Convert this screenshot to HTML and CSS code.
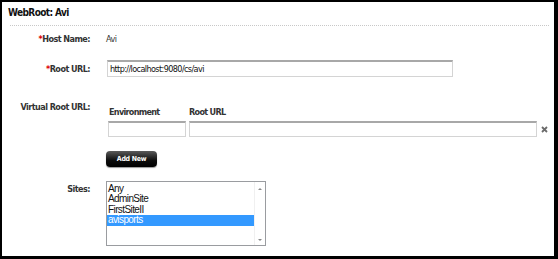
FILE: index.html
```html
<!DOCTYPE html>
<html lang="en">
<head>
    <meta charset="UTF-8">
    <title>WebRoot: Avi</title>
    <link rel="stylesheet" href="styles.css">
</head>
<body>
    <div class="frame">
        <h1 class="title">WebRoot: Avi</h1>
        <div class="dots"></div>

        <div class="row host">
            <label class="lbl"><span class="req">*</span>Host Name:</label>
            <div class="val">Avi</div>
        </div>

        <div class="row url">
            <label class="lbl"><span class="req">*</span>Root URL:</label>
            <div class="val"><input class="txt wide" type="text" value="http://localhost:9080/cs/avi"></div>
        </div>

        <div class="row virtual">
            <label class="lbl">Virtual Root URL:</label>
            <div class="val">
                <div class="heads">
                    <span class="env">Environment</span>
                    <span>Root URL</span>
                </div>
                <div class="pair">
                    <input class="txt env-in" type="text">
                    <input class="txt root-in" type="text">
                    <svg class="del" width="7" height="7" viewBox="0 0 7 7"><path d="M1 1L6 6M6 1L1 6" stroke="#6b6b6b" stroke-width="1.8"/></svg>
                </div>
                <button class="add">Add New</button>
            </div>
        </div>

        <div class="row sites">
            <label class="lbl">Sites:</label>
            <div class="val">
                <div class="list">
                    <ul>
                        <li>Any</li>
                        <li>AdminSite</li>
                        <li>FirstSiteII</li>
                        <li class="sel">avisports</li>
                    </ul>
                    <div class="bar">
                        <span class="up"></span>
                        <span class="down"></span>
                    </div>
                </div>
            </div>
        </div>
    </div>
</body>
</html>
```
FILE: styles.css
```css
*{
    margin:0;
    padding:0;
    box-sizing:border-box;
}
body{
    background:#fff;
    font-family:"DejaVu Sans Condensed","DejaVu Sans",sans-serif;
    font-size:10px;
    color:#333;
}
.frame{
    width:558px;
    height:259px;
    border:2px solid #000;
    border-right-width:4px;
    border-bottom-width:3px;
    background:#fff;
}
.title{
    font-size:10px;
    font-weight:bold;
    letter-spacing:-0.6px;
    color:#111;
    padding:5px 0 0 6px;
    line-height:12px;
}
.dots{
    margin:6px 5px 0 8px;
    border-bottom:1px dotted #c8c8c8;
}
.row{
    display:grid;
    grid-template-columns:88px 1fr;
    column-gap:16px;
}
.lbl{
    text-align:right;
    font-weight:bold;
    font-size:9px;
    letter-spacing:-0.55px;
    color:#333;
    line-height:12px;
}
.req{
    color:#d00;
}
.host{
    margin-top:7px;
}
.host .val{
    line-height:12px;
    font-size:9px;
    letter-spacing:-0.5px;
}
.url{
    margin-top:15px;
    align-items:center;
}
.url .val{
    padding-left:1px;
}
.txt{
    height:17px;
    border:1px solid #d4d4d4;
    border-top:2px solid #a8a8a8;
    font-family:inherit;
    font-size:9px;
    letter-spacing:-0.6px;
    color:#111;
    padding:0 2px;
    outline:none;
}
.wide{
    width:346px;
}
.virtual{
    margin-top:24px;
}
.heads{
    padding:5px 0 0 3px;
    font-weight:bold;
    font-size:9px;
    letter-spacing:-0.7px;
    line-height:12px;
    display:flex;
}
.env{
    width:80px;
}
.pair{
    margin-top:3px;
    display:flex;
    align-items:center;
    gap:3px;
    padding-left:2px;
}
.env-in{
    width:78px;
    height:16px;
}
.root-in{
    width:348px;
    height:16px;
}
.del{
    margin-left:1px;
}
.add{
    margin-top:14px;
    width:51px;
    height:16px;
    border:none;
    border-radius:4px;
    background:linear-gradient(#5a5a5a,#0c0c0c 60%,#000);
    box-shadow:0 1px 1px rgba(0,0,0,0.4);
    color:#fff;
    font-family:inherit;
    font-weight:bold;
    font-size:7px;
    letter-spacing:-0.3px;
}
.sites{
    margin-top:14px;
}
.sites .lbl{
    padding-top:2px;
}
.list{
    width:160px;
    height:65px;
    border:1px solid #9a9ca0;
    display:flex;
    background:#fff;
}
.list ul{
    list-style:none;
    flex:1;
    padding-top:2px;
    font-family:"Liberation Sans",sans-serif;
    font-size:10px;
    letter-spacing:-0.6px;
    color:#111;
}
.list li{
    height:10.4px;
    line-height:10px;
    padding-left:1px;
}
.list li.sel{
    background:#3399ff;
    color:#fff;
}
.bar{
    width:11px;
    display:flex;
    flex-direction:column;
    justify-content:space-between;
    align-items:center;
    padding:6px 0 4px;
    border-left:1px solid #f0f0f0;
}
.up,.down{
    width:0;
    height:0;
    border-left:2px solid transparent;
    border-right:2px solid transparent;
}
.up{
    border-bottom:2px solid #888;
}
.down{
    border-top:2px solid #888;
}
```
